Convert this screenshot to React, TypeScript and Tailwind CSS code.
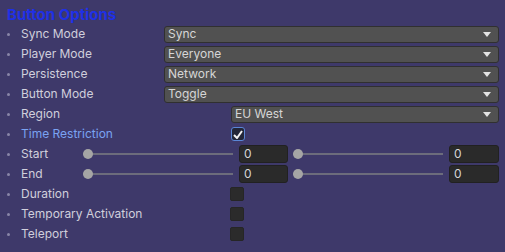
import { ReactNode } from "react"

const font = { fontFamily: "Inter, 'Noto Sans', sans-serif" }

function Dropdown({ value }: { value: string }) {
  return (
    <div className="flex-1 h-[17px] flex items-center justify-between bg-[#515151] border border-[#303030] rounded-[3px] pl-[3px] pr-[7px] text-[12px] text-[#d6d6d6]">
      <span>{value}</span>
      <svg width="8" height="5" viewBox="0 0 8 5">
        <path d="M0 0 H8 L4 5 Z" fill="#e4e4e4" />
      </svg>
    </div>
  )
}

function Checkbox({ checked }: { checked?: boolean }) {
  return (
    <div
      className={
        checked
          ? "w-[14px] h-[14px] rounded-[3px] bg-[#232638] border border-[#5a86d6] flex items-center justify-center"
          : "w-[14px] h-[14px] rounded-[2px] bg-[#2b2b2b] border border-[#262626]"
      }
    >
      {checked && (
        <svg width="10" height="9" viewBox="0 0 10 9">
          <path d="M1 5 L4 8 L9 1" stroke="#f2f2f2" strokeWidth="2" fill="none" />
        </svg>
      )}
    </div>
  )
}

function Slider() {
  return (
    <div className="relative flex-1 h-[18px] flex items-center">
      <div className="w-full h-[2px] bg-[#6c6c7c]" />
      <div className="absolute left-0 w-[10px] h-[10px] rounded-full bg-[#a5a5a5]" />
    </div>
  )
}

function NumField() {
  return (
    <div className="h-[18px] bg-[#2a2a2a] border border-[#212121] rounded-[3px] flex items-center pl-[4px] text-[12px] text-[#d6d6d6]">
      0
    </div>
  )
}

function Row({ label, labelWidth, blue, children }: { label: string; labelWidth?: string; blue?: boolean; children?: ReactNode }) {
  return (
    <div className="h-5 flex items-center pl-[7px] pr-[6px]">
      <span className="w-[3px] h-[3px] rounded-full bg-[#8986a8] mr-[11px]" />
      <span className={`${labelWidth ?? "w-[143px]"} shrink-0 text-[12px] ${blue ? "text-[#7aa3f2]" : "text-[#d0cfdc]"}`}>
        {label}
      </span>
      {children}
    </div>
  )
}

export default function App() {
  return (
    <div className="w-[505px] h-[252px] bg-[#3e396a] overflow-hidden" style={font}>
      <div className="h-[24px] pl-[7px] pt-[4px] flex items-center text-[15px] leading-none font-bold text-[#1f30e6]">Button Options</div>
      <Row label="Sync Mode">
        <Dropdown value="Sync" />
      </Row>
      <Row label="Player Mode">
        <Dropdown value="Everyone" />
      </Row>
      <Row label="Persistence">
        <Dropdown value="Network" />
      </Row>
      <Row label="Button Mode">
        <Dropdown value="Toggle" />
      </Row>
      <Row label="Region" labelWidth="w-[210px]">
        <Dropdown value="EU West" />
      </Row>
      <Row label="Time Restriction" labelWidth="w-[210px]" blue>
        <Checkbox checked />
      </Row>
      {["Start", "End"].map((l) => (
        <Row key={l} label={l} labelWidth="w-[62px]">
          <div className="flex-1 flex items-center">
            <div className="w-[150px] flex"><Slider /></div>
            <div className="w-[49px] ml-[6px]"><NumField /></div>
            <div className="w-[150px] ml-[5px] flex"><Slider /></div>
            <div className="w-[50px] ml-[6px]"><NumField /></div>
          </div>
        </Row>
      ))}
      <Row label="Duration" labelWidth="w-[209px]">
        <Checkbox />
      </Row>
      <Row label="Temporary Activation" labelWidth="w-[209px]">
        <Checkbox />
      </Row>
      <Row label="Teleport" labelWidth="w-[209px]">
        <Checkbox />
      </Row>
    </div>
  )
}
